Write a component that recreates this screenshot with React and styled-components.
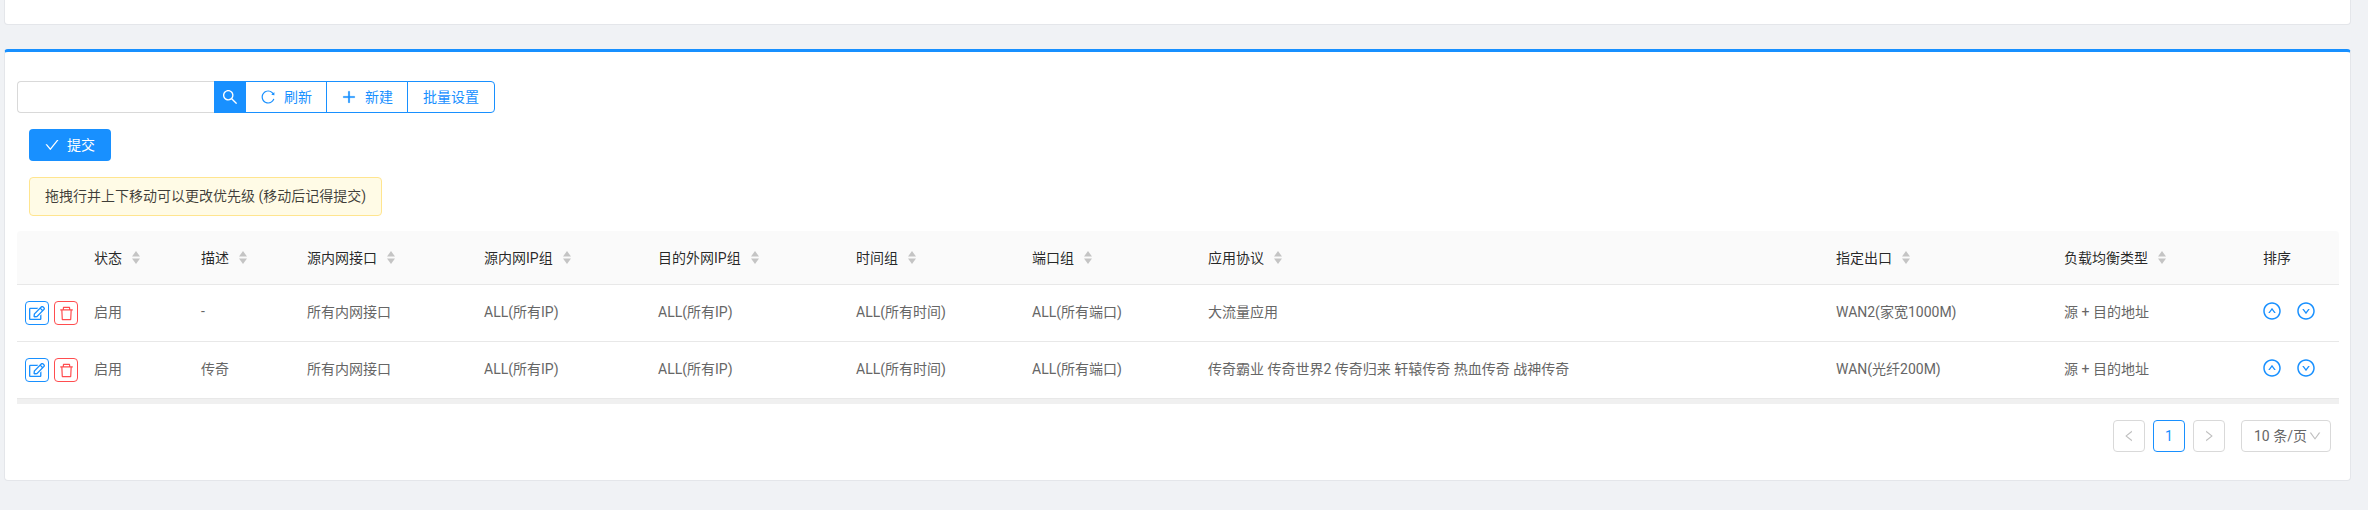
import React from 'react';
import styled, { createGlobalStyle } from 'styled-components';
import { AiOutlineSearch, AiOutlineReload, AiOutlinePlus, AiOutlineCheck, AiOutlineDelete, AiOutlineUpCircle, AiOutlineDownCircle, AiOutlineLeft, AiOutlineRight, AiOutlineDown } from 'react-icons/ai';
import { FaRegEdit } from 'react-icons/fa';

const Global = createGlobalStyle`
  html, body { margin: 0; padding: 0; background: #f0f2f5; }
  body { font-family: Roboto, "Noto Sans CJK SC", "Liberation Sans", sans-serif; font-size: 14px; color: rgba(0,0,0,.65); }
`;

const Page = styled.div`
  width: 2368px;
  height: 510px;
  overflow: hidden;
  padding-left: 4px;
  box-sizing: border-box;
`;

const TopCard = styled.div`
  width: 2347px;
  height: 25px;
  box-sizing: border-box;
  background: #fff;
  border: 1px solid #e4e6ea;
  border-top: 0;
  border-radius: 0 0 4px 4px;
`;

const Card = styled.section`
  width: 2347px;
  height: 432px;
  margin-top: 24px;
  box-sizing: border-box;
  background: #fff;
  border: 1px solid #e4e6ea;
  border-top: 3px solid #1890ff;
  border-radius: 4px;
  padding: 29px 12px 0;
`;

const Toolbar = styled.div`
  display: flex;
  height: 32px;
`;

const SearchInput = styled.input`
  width: 197px;
  height: 32px;
  box-sizing: border-box;
  border: 1px solid #d9d9d9;
  border-right: 0;
  border-radius: 4px 0 0 4px;
  outline: none;
  padding: 0 11px;
  background: #fff;
`;

const SearchButton = styled.button`
  width: 32px;
  height: 32px;
  padding: 0;
  border: 0;
  background: #1890ff;
  color: #fff;
  display: flex;
  align-items: center;
  justify-content: center;
  font-size: 18px;
`;

const GroupButton = styled.button`
  width: ${p => p.$w}px;
  height: 32px;
  box-sizing: border-box;
  padding: 0 0 2px;
  margin-left: -1px;
  border: 1px solid #1890ff;
  border-radius: ${p => (p.$last ? '0 4px 4px 0' : '0')};
  background: #fff;
  color: #1890ff;
  font: inherit;
  display: flex;
  align-items: center;
  justify-content: center;
  gap: 8px;
  svg { font-size: 16px; margin-top: 2px; }
`;

const SubmitButton = styled.button`
  display: flex;
  align-items: center;
  justify-content: center;
  gap: 7px;
  width: 82px;
  height: 32px;
  margin: 16px 0 0 12px;
  padding: 0 1px 2px 0;
  border: 0;
  border-radius: 4px;
  background: #1890ff;
  color: #fff;
  font: inherit;
  svg { font-size: 16px; margin-top: 2px; }
`;

const Alert = styled.div`
  width: 353px;
  height: 39px;
  box-sizing: border-box;
  margin: 16px 0 0 12px;
  padding: 0 15px 3px;
  display: flex;
  align-items: center;
  background: #fffbe6;
  border: 1px solid #ffe58f;
  border-radius: 4px;
  color: rgba(0,0,0,.75);
  white-space: nowrap;
`;

const Table = styled.table`
  width: 2322px;
  margin-top: 15px;
  table-layout: fixed;
  border-collapse: separate;
  border-spacing: 0;
`;

const Th = styled.th`
  height: 54px;
  box-sizing: border-box;
  padding: 0 0 2px 8px;
  background: #fafafa;
  border-bottom: 1px solid #e8e8e8;
  font-weight: 400;
  text-align: left;
  color: rgba(0,0,0,.85);
  white-space: nowrap;
  &:first-child { border-top-left-radius: 4px; }
  &:last-child { border-top-right-radius: 4px; }
`;

const HeadInner = styled.span`
  display: inline-flex;
  align-items: center;
  gap: 10px;
  svg { margin-top: 2px; }
`;

const Td = styled.td`
  height: 57px;
  box-sizing: border-box;
  padding: 0 0 5px 8px;
  border-bottom: 1px solid #e8e8e8;
  white-space: nowrap;
  color: #666;
`;

const ActionCell = styled.td`
  height: 57px;
  box-sizing: border-box;
  padding: 0 0 0 8px;
  border-bottom: 1px solid #e8e8e8;
`;

const Actions = styled.div`
  display: flex;
  gap: 5px;
`;

const IconButton = styled.button`
  width: 24px;
  height: 24px;
  padding: 0;
  border: 1px solid ${p => p.$c};
  border-radius: 4px;
  background: #fff;
  color: ${p => p.$c};
  display: flex;
  align-items: center;
  justify-content: center;
  font-size: ${p => p.$size}px;
`;

const OrderIcons = styled.div`
  display: flex;
  gap: 14px;
  margin-left: -1px;
  padding-bottom: 5px;
  color: #1890ff;
  font-size: 20px;
  svg { display: block; }
`;

const ScrollBar = styled.div`
  width: 2322px;
  height: 5px;
  background: #f0f0f0;
`;

const Pager = styled.nav`
  display: flex;
  justify-content: flex-end;
  width: 2314px;
  margin-top: 16px;
`;

const PageBox = styled.button`
  width: 32px;
  height: 32px;
  margin-right: 8px;
  padding: 0;
  box-sizing: border-box;
  border: 1px solid ${p => (p.$active ? '#1890ff' : '#d9d9d9')};
  border-radius: 4px;
  background: #fff;
  color: ${p => (p.$active ? '#1890ff' : '#bfbfbf')};
  font: inherit;
  font-size: 14px;
  display: flex;
  align-items: center;
  justify-content: center;
`;

const SizeSelect = styled.div`
  width: 90px;
  height: 32px;
  margin-left: 8px;
  box-sizing: border-box;
  border: 1px solid #d9d9d9;
  border-radius: 4px;
  padding: 0 0 2px 12px;
  display: flex;
  align-items: center;
  gap: 1px;
  color: #666;
  white-space: nowrap;
  svg { color: #bfbfbf; font-size: 14px; margin-top: 2px; }
`;

const Sorter = () => (
  <svg width="8" height="13" viewBox="0 0 8 13" fill="#c4c4c4">
    <path d="M4 0 L8 5.5 H0 Z" />
    <path d="M0 7.5 H8 L4 13 Z" />
  </svg>
);

const columns = [
  { w: 69 },
  { w: 107, t: '状态', s: 1 },
  { w: 106, t: '描述', s: 1 },
  { w: 177, t: '源内网接口', s: 1 },
  { w: 174, t: '源内网IP组', s: 1 },
  { w: 198, t: '目的外网IP组', s: 1 },
  { w: 176, t: '时间组', s: 1 },
  { w: 176, t: '端口组', s: 1 },
  { w: 628, t: '应用协议', s: 1 },
  { w: 228, t: '指定出口', s: 1 },
  { w: 199, t: '负载均衡类型', s: 1 },
  { w: 84, t: '排序' },
];

const rows = [
  ['启用', '-', '所有内网接口', 'ALL(所有IP)', 'ALL(所有IP)', 'ALL(所有时间)', 'ALL(所有端口)', '大流量应用', 'WAN2(家宽1000M)', '源 + 目的地址'],
  ['启用', '传奇', '所有内网接口', 'ALL(所有IP)', 'ALL(所有IP)', 'ALL(所有时间)', 'ALL(所有端口)', '传奇霸业 传奇世界2 传奇归来 轩辕传奇 热血传奇 战神传奇', 'WAN(光纤200M)', '源 + 目的地址'],
];

export default function App() {
  return (
    <Page>
      <Global />
      <TopCard />
      <Card>
        <Toolbar>
          <SearchInput />
          <SearchButton><AiOutlineSearch /></SearchButton>
          <GroupButton $w={82}><AiOutlineReload />刷新</GroupButton>
          <GroupButton $w={82}><AiOutlinePlus strokeWidth={40} />新建</GroupButton>
          <GroupButton $w={88} $last>批量设置</GroupButton>
        </Toolbar>
        <SubmitButton><AiOutlineCheck />提交</SubmitButton>
        <Alert>拖拽行并上下移动可以更改优先级 (移动后记得提交)</Alert>
        <Table>
          <colgroup>
            {columns.map((c, i) => <col key={i} width={c.w} />)}
          </colgroup>
          <thead>
            <tr>
              {columns.map((c, i) => (
                <Th key={i}>
                  {c.t && <HeadInner>{c.t}{c.s && <Sorter />}</HeadInner>}
                </Th>
              ))}
            </tr>
          </thead>
          <tbody>
            {rows.map((r, i) => (
              <tr key={i}>
                <ActionCell>
                  <Actions>
                    <IconButton $c="#1890ff" $size={16}><FaRegEdit /></IconButton>
                    <IconButton $c="#ff4d4f" $size={17}><AiOutlineDelete /></IconButton>
                  </Actions>
                </ActionCell>
                {r.map((v, j) => <Td key={j}>{v}</Td>)}
                <ActionCell>
                  <OrderIcons><AiOutlineUpCircle /><AiOutlineDownCircle /></OrderIcons>
                </ActionCell>
              </tr>
            ))}
          </tbody>
        </Table>
        <ScrollBar />
        <Pager>
          <PageBox><AiOutlineLeft /></PageBox>
          <PageBox $active>1</PageBox>
          <PageBox><AiOutlineRight /></PageBox>
          <SizeSelect>10 条/页<AiOutlineDown /></SizeSelect>
        </Pager>
      </Card>
    </Page>
  );
}
